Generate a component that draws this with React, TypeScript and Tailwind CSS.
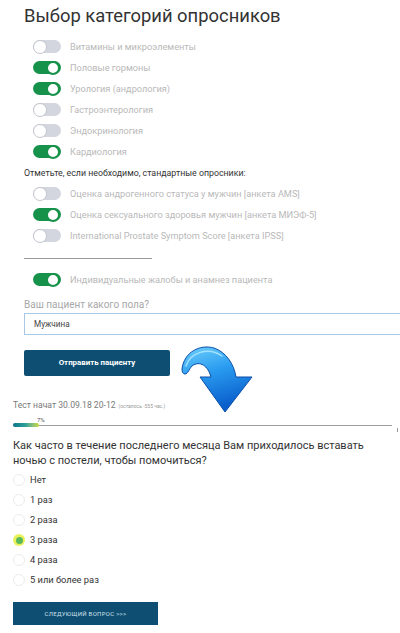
import React, { useState } from "react";

const font = { fontFamily: "Roboto, 'Noto Sans', sans-serif" };

type ToggleProps = { on: boolean; label: string; onChange: () => void };

function Toggle({ on, label, onChange }: ToggleProps) {
  return (
    <div className="flex h-[21px] items-center pl-[9px]" onClick={onChange}>
      <div
        className={`relative h-[13px] w-[28px] rounded-full ${
          on ? "bg-[#17924a]" : "bg-[#d3d6de]"
        }`}
      >
        <div
          className={`absolute top-[-0.5px] h-[14px] w-[14px] rounded-full bg-white ${
            on ? "right-[1px] border-[2px] border-[#17924a]" : "left-0 border border-[#c3c6cf]"
          }`}
        />
      </div>
      <span className="ml-[9px] text-[9.2px] text-[#b9b9b9]">{label}</span>
    </div>
  );
}

function Radio({ checked, label, onSelect }: { checked: boolean; label: string; onSelect: () => void }) {
  return (
    <div className="flex h-[20px] items-center" onClick={onSelect}>
      <div
        className={`flex h-[12px] w-[12px] items-center justify-center rounded-full ${
          checked ? "bg-[#eaf25a]" : "border border-[#ececec] bg-white"
        }`}
      >
        {checked && <div className="h-[7px] w-[7px] rounded-full bg-[#5cb85c]" />}
      </div>
      <span className="ml-[5px] text-[9.3px] text-[#333]">{label}</span>
    </div>
  );
}

// blue "continue below" arrow sitting between the two screens
function CurvedArrow() {
  return (
    <svg width="78" height="72" viewBox="0 0 78 72" className="absolute left-[178px] top-[342px]">
      <defs>
        <linearGradient id="arrowFill" x1="0" y1="0" x2="0.3" y2="1">
          <stop offset="0" stopColor="#6fd0fb" />
          <stop offset="0.45" stopColor="#2a9cf0" />
          <stop offset="1" stopColor="#0a5fcc" />
        </linearGradient>
      </defs>
      <path
        d="M4 27 C6 10 22 2 36 6 C48 10 56 22 58 35 L74 35 L47 70 L22 35 L33 35 C30 24 22 18 14 24 C11 27 10 32 7 32 C5 32 4 30 4 27 Z"
        fill="url(#arrowFill)"
        stroke="#0b4fa8"
        strokeWidth="1"
        strokeLinejoin="round"
      />
      <path d="M8 24 C12 11 30 4 44 14" fill="none" stroke="#b8ecff" strokeWidth="1.5" strokeLinecap="round" opacity="0.8" />
    </svg>
  );
}

export default function App() {
  const [cats, setCats] = useState([
    { label: "Витамины и микроэлементы", on: false },
    { label: "Половые гормоны", on: true },
    { label: "Урология (андрология)", on: true },
    { label: "Гастроэнтерология", on: false },
    { label: "Эндокринология", on: false },
    { label: "Кардиология", on: true },
  ]);
  const [forms, setForms] = useState([
    { label: "Оценка андрогенного статуса у мужчин [анкета AMS]", on: false },
    { label: "Оценка сексуального здоровья мужчин [анкета МИЭФ-5]", on: true },
    { label: "International Prostate Symptom Score [анкета IPSS]", on: false },
  ]);
  const [complaints, setComplaints] = useState(true);
  const [answer, setAnswer] = useState(3);

  const answers = ["Нет", "1 раз", "2 раза", "3 раза", "4 раза", "5 или более раз"];

  return (
    <div className="relative h-[633px] w-[400px] overflow-hidden bg-white" style={font}>
      <div className="pl-[24px] pt-[4px]">
        <h1 className="text-[18.4px] leading-[24px] text-[#333]">Выбор категорий опросников</h1>

        <div className="mt-[8px]">
          {cats.map((c, i) => (
            <Toggle
              key={c.label}
              on={c.on}
              label={c.label}
              onChange={() => setCats(cats.map((x, j) => (j === i ? { ...x, on: !x.on } : x)))}
            />
          ))}
        </div>

        <p className="mt-[5px] text-[8.8px] leading-[12px] text-[#333]">
          Отметьте, если необходимо, стандартные опросники:
        </p>

        <div className="mt-[4px]">
          {forms.map((f, i) => (
            <Toggle
              key={f.label}
              on={f.on}
              label={f.label}
              onChange={() => setForms(forms.map((x, j) => (j === i ? { ...x, on: !x.on } : x)))}
            />
          ))}
        </div>

        <div className="mt-[12px] h-px w-[128px] bg-[#9a9a9a]" />

        <div className="mt-[10px]">
          <Toggle
            on={complaints}
            label="Индивидуальные жалобы и анамнез пациента"
            onChange={() => setComplaints(!complaints)}
          />
        </div>

        <p className="mt-[8px] text-[10px] leading-[14px] text-[#a8a8a8]">Ваш пациент какого пола?</p>
        <div className="mt-[1px] flex h-[22px] w-[400px] items-center border border-[#a9c9e8] pl-[9px] text-[8.2px] text-[#444]">
          Мужчина
        </div>

        <button className="mt-[15px] flex h-[26px] w-[146px] items-center justify-center rounded-[2px] bg-[#0e4e72] text-[7.9px] font-bold text-white">
          Отправить пациенту
        </button>
      </div>

      <div className="pl-[13px] pr-[8px]">
        <p className="mt-[23px] flex items-baseline text-[8.6px] leading-[12px] text-[#7a7a7a]">
          Тест начат 30.09.18 20-12
          <span className="ml-[3px] text-[5px] text-[#999]">(осталось -555 час.)</span>
        </p>

        <div className="mt-[4px] pl-[24px] text-[6px] leading-[7px] text-[#555]">7%</div>
        <div className="relative h-[5px] w-[379px]">
          <div className="absolute left-0 right-0 top-[2px] h-px bg-[#9d9d9d]" />
          <div className="absolute left-0 top-0 h-[4px] w-[26px] rounded-[2px] bg-gradient-to-r from-[#0d7489] via-[#2fa59a] to-[#c9d930]" />
        </div>

        <p className="mt-[10px] w-[362px] text-[11px] leading-[15px] text-[#333]">
          Как часто в течение последнего месяца Вам приходилось вставать ночью с постели, чтобы помочиться?
        </p>

        <div className="mt-[2px]">
          {answers.map((a, i) => (
            <Radio key={a} checked={answer === i} label={a} onSelect={() => setAnswer(i)} />
          ))}
        </div>

        <button className="mt-[12px] flex h-[23px] w-[145px] items-center justify-center bg-[#0e4e72] text-[6px] tracking-[0.3px] text-[#cfe0ec]">
          СЛЕДУЮЩИЙ ВОПРОС &gt;&gt;&gt;
        </button>
        <div className="mt-[8px] h-px w-[174px] bg-[#e3e3e3]" />
      </div>

      <div className="absolute left-[397px] top-[428px] h-[4px] w-px bg-[#999]" />
      <CurvedArrow />
    </div>
  );
}
